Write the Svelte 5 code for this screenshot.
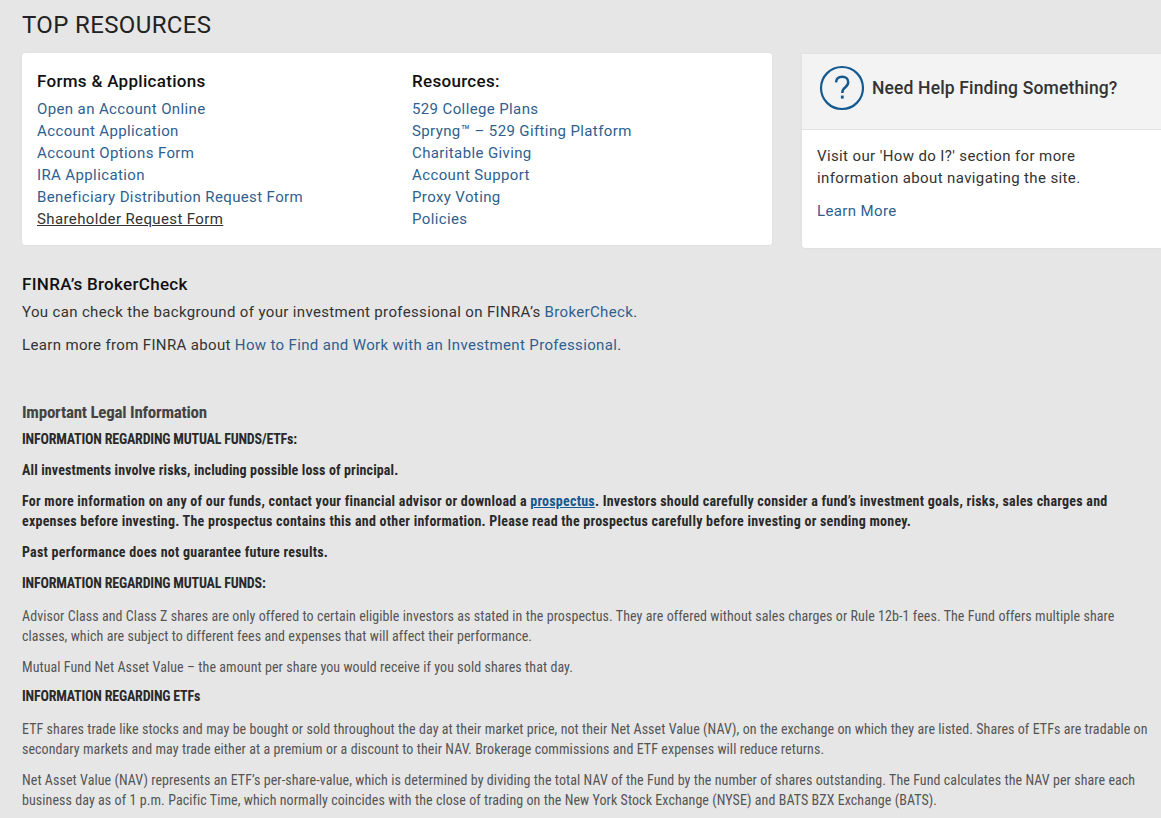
<script>
    const forms = ['Open an Account Online', 'Account Application', 'Account Options Form', 'IRA Application', 'Beneficiary Distribution Request Form', 'Shareholder Request Form'];
    const resources = ['529 College Plans', 'Spryng™ – 529 Gifting Platform', 'Charitable Giving', 'Account Support', 'Proxy Voting', 'Policies'];
</script>

<div class="page">
    <h1>TOP RESOURCES</h1>

    <div class="top">
        <div class="card links">
            <div class="col">
                <h3>Forms &amp; Applications</h3>
                {#each forms as item, i}
                    <a class="link" class:active={i === 5} href="#top">{item}</a>
                {/each}
            </div>
            <div class="col">
                <h3>Resources:</h3>
                {#each resources as item}
                    <a class="link" href="#top">{item}</a>
                {/each}
            </div>
        </div>

        <div class="card help">
            <div class="help-head">
                <svg width="46" height="46" viewBox="0 0 46 46" fill="none">
                    <circle cx="23" cy="23" r="21" stroke="#14598f" stroke-width="2.2"/>
                    <path d="M17 17.400c.3-3.600 2.700-5.600 6.200-5.600 3.500 0 6 2.200 6 5.400 0 2.500-1.300 3.800-3.100 5.200-1.900 1.400-2.700 2.500-2.700 4.800v.9" stroke="#14598f" stroke-width="2.500"/>
                    <rect x="21.900" y="30.600" width="2.800" height="3" fill="#14598f"/>
                </svg>
                <span>Need Help Finding Something?</span>
            </div>
            <div class="help-body">
                <p>Visit our 'How do I?' section for more<br>information about navigating the site.</p>
                <a class="link" href="#top">Learn More</a>
            </div>
        </div>
    </div>

    <section class="finra">
        <h3>FINRA’s BrokerCheck</h3>
        <p>You can check the background of your investment professional on FINRA’s <a href="#top">BrokerCheck</a>.</p>
        <p>Learn more from FINRA about <a href="#top">How to Find and Work with an Investment Professional</a>.</p>
    </section>

    <section class="legal">
        <h4>Important Legal Information</h4>
        <p class="strong caps">INFORMATION REGARDING MUTUAL FUNDS/ETFs:</p>
        <p class="strong short">All investments involve risks, including possible loss of principal.</p>
        <p class="strong">For more information on any of our funds, contact your financial advisor or download a <a href="#top">prospectus</a>. Investors should carefully consider a fund’s investment goals, risks, sales charges and<br>expenses before investing. The prospectus contains this and other information. Please read the prospectus carefully before investing or sending money.</p>
        <p class="strong">Past performance does not guarantee future results.</p>
        <p class="strong caps">INFORMATION REGARDING MUTUAL FUNDS:</p>
        <p class="spaced">Advisor Class and Class Z shares are only offered to certain eligible investors as stated in the prospectus. They are offered without sales charges or Rule 12b-1 fees. The Fund offers multiple share<br>classes, which are subject to different fees and expenses that will affect their performance.</p>
        <p class="tight">Mutual Fund Net Asset Value – the amount per share you would receive if you sold shares that day.</p>
        <p class="strong caps">INFORMATION REGARDING ETFs</p>
        <p class="spaced">ETF shares trade like stocks and may be bought or sold throughout the day at their market price, not their Net Asset Value (NAV), on the exchange on which they are listed. Shares of ETFs are tradable on<br>secondary markets and may trade either at a premium or a discount to their NAV. Brokerage commissions and ETF expenses will reduce returns.</p>
        <p>Net Asset Value (NAV) represents an ETF’s per-share-value, which is determined by dividing the total NAV of the Fund by the number of shares outstanding. The Fund calculates the NAV per share each<br>business day as of 1 p.m. Pacific Time, which normally coincides with the close of trading on the New York Stock Exchange (NYSE) and BATS BZX Exchange (BATS).</p>
    </section>
</div>

<style>
    :global(body) {
        margin: 0;
        background: #e6e6e6;
    }
    .page {
        height: 818px;
        overflow: hidden;
        padding: 0 0 0 22px;
        font-family: Roboto, "Liberation Sans", sans-serif;
        color: #333;
    }
    h1 {
        margin: 0;
        padding-top: 11px;
        height: 42px;
        box-sizing: border-box;
        font-size: 24px;
        line-height: 28px;
        font-weight: 400;
        letter-spacing: 0.37px;
        color: #222;
    }
    .top {
        display: flex;
        align-items: flex-start;
        gap: 30px;
    }
    .card {
        background: #fff;
        border-radius: 3px;
        box-shadow: 0 0 2px rgba(0, 0, 0, 0.08);
    }
    .links {
        display: flex;
        flex: none;
        width: 750px;
        height: 192px;
        box-sizing: border-box;
        padding: 17px 15px 0;
        margin-top: 11px;
    }
    .col {
        flex: none;
        width: 375px;
        display: flex;
        flex-direction: column;
        align-items: flex-start;
    }
    h3 {
        margin: 0;
        font-size: 17px;
        line-height: 22px;
        font-weight: 500;
        color: #111;
        letter-spacing: 0.3px;
    }
    .col h3 {
        margin-bottom: 6px;
    }
    .link, a {
        color: #2f5f8f;
        text-decoration: none;
    }
    .link {
        font-size: 15px;
        line-height: 22px;
        letter-spacing: 0.38px;
    }
    .link.active {
        color: #333;
        text-decoration: underline;
    }
    .help {
        flex: 1;
        height: 194px;
        margin-top: 12px;
        border-radius: 3px 0 0 3px;
    }
    .help-head {
        display: flex;
        align-items: center;
        gap: 7px;
        height: 76px;
        padding: 0 0 7px 17px;
        box-sizing: border-box;
        background: #f3f3f3;
        border-bottom: 1px solid #e2e2e2;
    }
    .help-head span {
        font-size: 17.5px;
        font-weight: 500;
        color: #333;
        letter-spacing: 0.15px;
    }
    .help-body {
        padding: 15px 15px 0;
    }
    .help-body p {
        margin: 0 0 11px;
        font-size: 15px;
        line-height: 22px;
        letter-spacing: 0.38px;
    }
    .finra {
        margin-top: 25px;
    }
    .finra h3 {
        margin-bottom: 6px;
    }
    .finra p {
        margin: 0 0 11px;
        font-size: 15px;
        line-height: 22px;
        letter-spacing: 0.35px;
    }
    .legal {
        margin-top: 45px;
        font-family: "Liberation Sans Narrow", "Roboto Condensed", Roboto, sans-serif;
        font-size: 14px;
        line-height: 20px;
        white-space: nowrap;
        color: #555;
        letter-spacing: 0.07px;
    }
    h4 {
        margin: 0 0 6px;
        font-size: 17px;
        line-height: 22px;
        font-weight: 700;
        color: #444;
        letter-spacing: -0.24px;
    }
    .legal p {
        margin: 0 0 11px;
    }
    .legal p.tight {
        margin-bottom: 9px;
    }
    .legal a {
        color: #14598f;
        text-decoration: underline;
        font-weight: 700;
    }
    .strong {
        font-weight: 700;
        color: #2a2a2a;
        letter-spacing: 0.24px;
    }
    .strong.short {
        letter-spacing: 0.13px;
    }
    .strong.caps {
        letter-spacing: -0.2px;
    }
    .legal p.spaced {
        margin-top: 13px;
    }
</style>
